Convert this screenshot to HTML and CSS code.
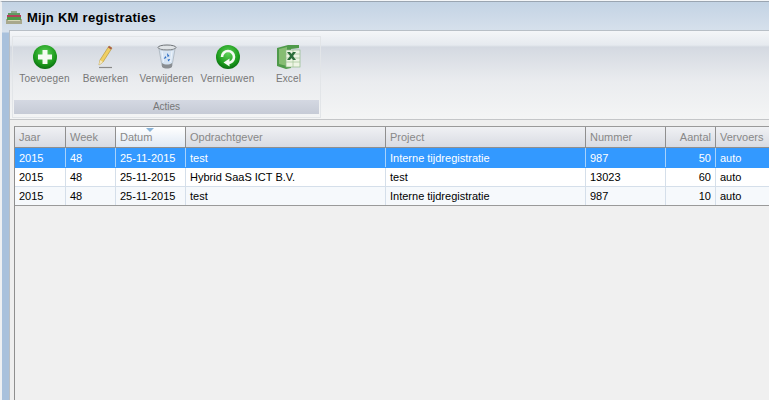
FILE: index.html
```html
<!DOCTYPE html>
<html lang="nl">
  <head>
    <meta charset="UTF-8" />
    <title>Mijn KM registraties</title>
    <link rel="stylesheet" href="styles.css">
  </head>
  <body>
    <div class="window">
      <div class="titlebar">
        <svg class="title-icon" width="16" height="13" viewBox="0 0 16 13">
          <rect x="0" y="8" width="16" height="5" fill="#a8a88c"/>
          <rect x="1" y="4" width="14" height="3" fill="#b3405a"/>
          <rect x="1" y="6" width="14" height="3" fill="#4f9a4a"/>
          <rect x="2" y="2" width="12" height="2" fill="#5f9a62"/>
          <rect x="5" y="0" width="6" height="2" fill="#8fa88f"/>
          <rect x="2" y="9" width="12" height="1" fill="#d8d8b8"/>
        </svg>
        <span class="title">Mijn KM registraties</span>
      </div>
      <div class="content">
        <div class="ribbon">
          <div class="group">
            <div class="group-buttons">
              <div class="rbtn">
                <svg width="26" height="26" viewBox="0 0 26 26">
                  <defs>
                    <radialGradient id="green" cx="50%" cy="35%" r="65%">
                      <stop offset="0" stop-color="#5fd35a"/>
                      <stop offset="0.7" stop-color="#1c9a1c"/>
                      <stop offset="1" stop-color="#0a6e12"/>
                    </radialGradient>
                  </defs>
                  <circle cx="13" cy="13" r="12" fill="url(#green)"/>
                  <path d="M10.500 6h5v4.500h4.500v5h-4.500v4.500h-5v-4.500h-4.500v-5h4.500z" fill="#f4fbf2"/>
                </svg>
                <span>Toevoegen</span>
              </div>
              <div class="rbtn">
                <svg width="26" height="26" viewBox="0 0 26 26">
                  <path d="M6 21l1-5L16 2l3 2-9 14z" fill="#f0cf62" stroke="#b89a3c" stroke-width="0.700"/>
                  <path d="M16 2l3 2-1 1.500-3-2z" fill="#a85a50"/>
                  <path d="M6 21l1-5 3 2z" fill="#f3e6c0"/>
                  <path d="M6 23.500h13" stroke="#8a8a8a" stroke-width="1.200"/>
                </svg>
                <span>Bewerken</span>
              </div>
              <div class="rbtn">
                <svg width="26" height="26" viewBox="0 0 26 26">
                  <ellipse cx="13" cy="3.500" rx="9" ry="2.500" fill="#dfe3e6" stroke="#6f7478"/>
                  <path d="M5 5l3 17c2 2 8 2 10 0l3-17c-3 2-13 2-16 0z" fill="#d5e3f2" stroke="#a5adb5" stroke-width="0.700"/>
                  <path d="M8 19c3 2 7 2 10 0v4c-3 2-7 2-10 0z" fill="#8a8e92"/>
                  <path d="M13 9l2.500 3-2 1zM9.500 15l2-3 1 2zM16.500 15l-2 2.500-1-2z" fill="#2f6fc4"/>
                  <path d="M8 7l1.500 11M18 7l-1.500 11" stroke="#f4f8fc" stroke-width="0.800"/>
                </svg>
                <span>Verwijderen</span>
              </div>
              <div class="rbtn">
                <svg width="26" height="26" viewBox="0 0 26 26">
                  <circle cx="13" cy="13" r="12" fill="url(#green)"/>
                  <path d="M7 13a6 6 0 1 1 6 6" fill="none" stroke="#f4fbf2" stroke-width="2.600"/>
                  <path d="M14.500 14.500v8l-6-4z" fill="#f4fbf2"/>
                </svg>
                <span>Vernieuwen</span>
              </div>
              <div class="rbtn">
                <svg width="26" height="26" viewBox="0 0 26 26">
                  <path d="M1 4l11-3h11v3l-8 1v19l-5 1-9-3z" fill="#4f9a4a"/>
                  <path d="M3 5l8-2v19l-8-2z" fill="#86bd72"/>
                  <rect x="10" y="6" width="14" height="17" fill="#eef5e4" stroke="#8fb98a" stroke-width="0.700"/>
                  <path d="M17 6v17M10 10h14M10 14h14M10 18h14" stroke="#a9c9a0" stroke-width="0.800"/>
                  <path d="M11 8h3l1.500 2 1.500-2h3l-3 4 3 4h-3l-1.500-2-1.500 2h-3l3-4z" fill="#2c6e3a"/>
                </svg>
                <span>Excel</span>
              </div>
            </div>
            <div class="group-label">Acties</div>
          </div>
        </div>
        <div class="grid">
          <div class="row head">
            <div class="cell c-jaar">Jaar</div>
            <div class="cell c-week">Week</div>
            <div class="cell c-datum sorted">Datum<span class="sort-arrow"></span></div>
            <div class="cell c-opdr">Opdrachtgever</div>
            <div class="cell c-proj">Project</div>
            <div class="cell c-num">Nummer</div>
            <div class="cell c-aantal">Aantal</div>
            <div class="cell c-verv">Vervoers</div>
          </div>
          <div class="row selected">
            <div class="cell c-jaar">2015</div>
            <div class="cell c-week">48</div>
            <div class="cell c-datum">25-11-2015</div>
            <div class="cell c-opdr">test</div>
            <div class="cell c-proj">Interne tijdregistratie</div>
            <div class="cell c-num">987</div>
            <div class="cell c-aantal">50</div>
            <div class="cell c-verv">auto</div>
          </div>
          <div class="row">
            <div class="cell c-jaar">2015</div>
            <div class="cell c-week">48</div>
            <div class="cell c-datum">25-11-2015</div>
            <div class="cell c-opdr">Hybrid SaaS ICT B.V.</div>
            <div class="cell c-proj">test</div>
            <div class="cell c-num">13023</div>
            <div class="cell c-aantal">60</div>
            <div class="cell c-verv">auto</div>
          </div>
          <div class="row alt last">
            <div class="cell c-jaar">2015</div>
            <div class="cell c-week">48</div>
            <div class="cell c-datum">25-11-2015</div>
            <div class="cell c-opdr">test</div>
            <div class="cell c-proj">Interne tijdregistratie</div>
            <div class="cell c-num">987</div>
            <div class="cell c-aantal">10</div>
            <div class="cell c-verv">auto</div>
          </div>
        </div>
      </div>
    </div>
  </body>
</html>
```

FILE: styles.css
```css
html,
body {
  margin: 0;
  padding: 0;
  height: 400px;
  overflow: hidden;
  background-color: #f4f6f8;
}

body {
  font-family: "Liberation Sans", Arial, sans-serif;
  font-size: 11px;
}

.window {
  height: 399px;
  margin-top: 1px;
  border-top: 1px solid #9aa5b1;
  border-left: 2px solid #eef0f2;
  box-sizing: border-box;
  background: linear-gradient(to bottom, #c3d3e4 0, #d7e1ec 30px, #a9c1dc 31px, #a9c1dc 100%);
  display: flex;
  flex-direction: column;
}

.titlebar {
  height: 28px;
  display: flex;
  align-items: center;
  gap: 5px;
  padding: 3px 0 0 4px;
  box-sizing: border-box;
  flex-shrink: 0;
}

.title {
  font-size: 13px;
  font-weight: bold;
  letter-spacing: 0.27px;
  color: #000;
}

.content {
  flex: 1;
  margin-left: 7px;
  background-color: #efefef;
  border-left: 1px solid #b8bfc6;
  border-top: 1px solid #b8bfc6;
  display: flex;
  flex-direction: column;
  min-height: 0;
}

.ribbon {
  height: 89px;
  flex-shrink: 0;
  padding: 5px 0 0 2px;
  box-sizing: border-box;
  border-bottom: 1px solid #c4c6c8;
  background: linear-gradient(to bottom, #f4f6f8 0, #e6eaef 14px, #d4d9e1 16px, #eaecef 50px, #f4f5f5 100%);
}

.group {
  width: 309px;
  height: 82px;
  box-sizing: border-box;
  border: 1px solid #e2e5e8;
  padding: 1px;
  display: flex;
  flex-direction: column;
}

.group-buttons {
  flex: 1;
  display: flex;
}

.rbtn {
  width: 61px;
  display: flex;
  flex-direction: column;
  align-items: center;
  padding-top: 6px;
  box-sizing: border-box;
  color: #777;
  font-size: 10px;
  letter-spacing: 0.15px;
  white-space: nowrap;
}

.rbtn svg {
  flex-shrink: 0;
  margin-bottom: 3px;
}

.group-label {
  height: 14px;
  line-height: 14px;
  margin-bottom: 2px;
  text-align: center;
  color: #777;
  font-size: 10px;
  background: linear-gradient(to bottom, #d4d8e2, #c6cbd6);
}

.grid {
  flex: 1;
  min-height: 0;
  margin: 6px 0 0 4px;
  border-top: 1px solid #9a9a9a;
  border-left: 1px solid #8f8f8f;
  background-color: #f0f0f0;
}

.row {
  display: flex;
  height: 19px;
  line-height: 18px;
  box-sizing: border-box;
  border-bottom: 1px solid #d5dfea;
  color: #000;
  white-space: nowrap;
  background-color: #fff;
}

.row .cell {
  box-sizing: border-box;
  padding: 0 4px;
  border-right: 1px solid #d5dfea;
  flex-shrink: 0;
  overflow: hidden;
}

.row.alt {
  background-color: #f6f9fc;
}

.row.last {
  border-bottom-color: #9a9a9a;
}

.row.selected {
  height: 20px;
  line-height: 20px;
  background-color: #3399ff;
  border-bottom-color: #3399ff;
  color: #fff;
}

.row.selected .cell {
  border-right-color: #a8d2fb;
}

.row.head {
  height: 21px;
  line-height: 20px;
  color: #888;
  background: linear-gradient(to bottom, #f0f1f4, #d8dbe2);
  border-bottom: 1px solid #8f8f8f;
}

.row.head .cell {
  border-right-color: #8f8f8f;
}

.head .sorted {
  position: relative;
  background: linear-gradient(to bottom, #fff, #dfe8f3);
}

.sort-arrow {
  position: absolute;
  top: 1px;
  left: 30px;
  width: 0;
  height: 0;
  border-left: 4px solid transparent;
  border-right: 4px solid transparent;
  border-top: 4px solid #8ab4d8;
}

.row .c-jaar { width: 51px; }
.row .c-week { width: 50px; }
.row .c-datum { width: 70px; }
.row .c-opdr { width: 200px; }
.row .c-proj { width: 200px; }
.row .c-num { width: 80px; }
.row .c-aantal { width: 50px; text-align: right; }
.row .c-verv { width: 54px; border-right: none; }
```
